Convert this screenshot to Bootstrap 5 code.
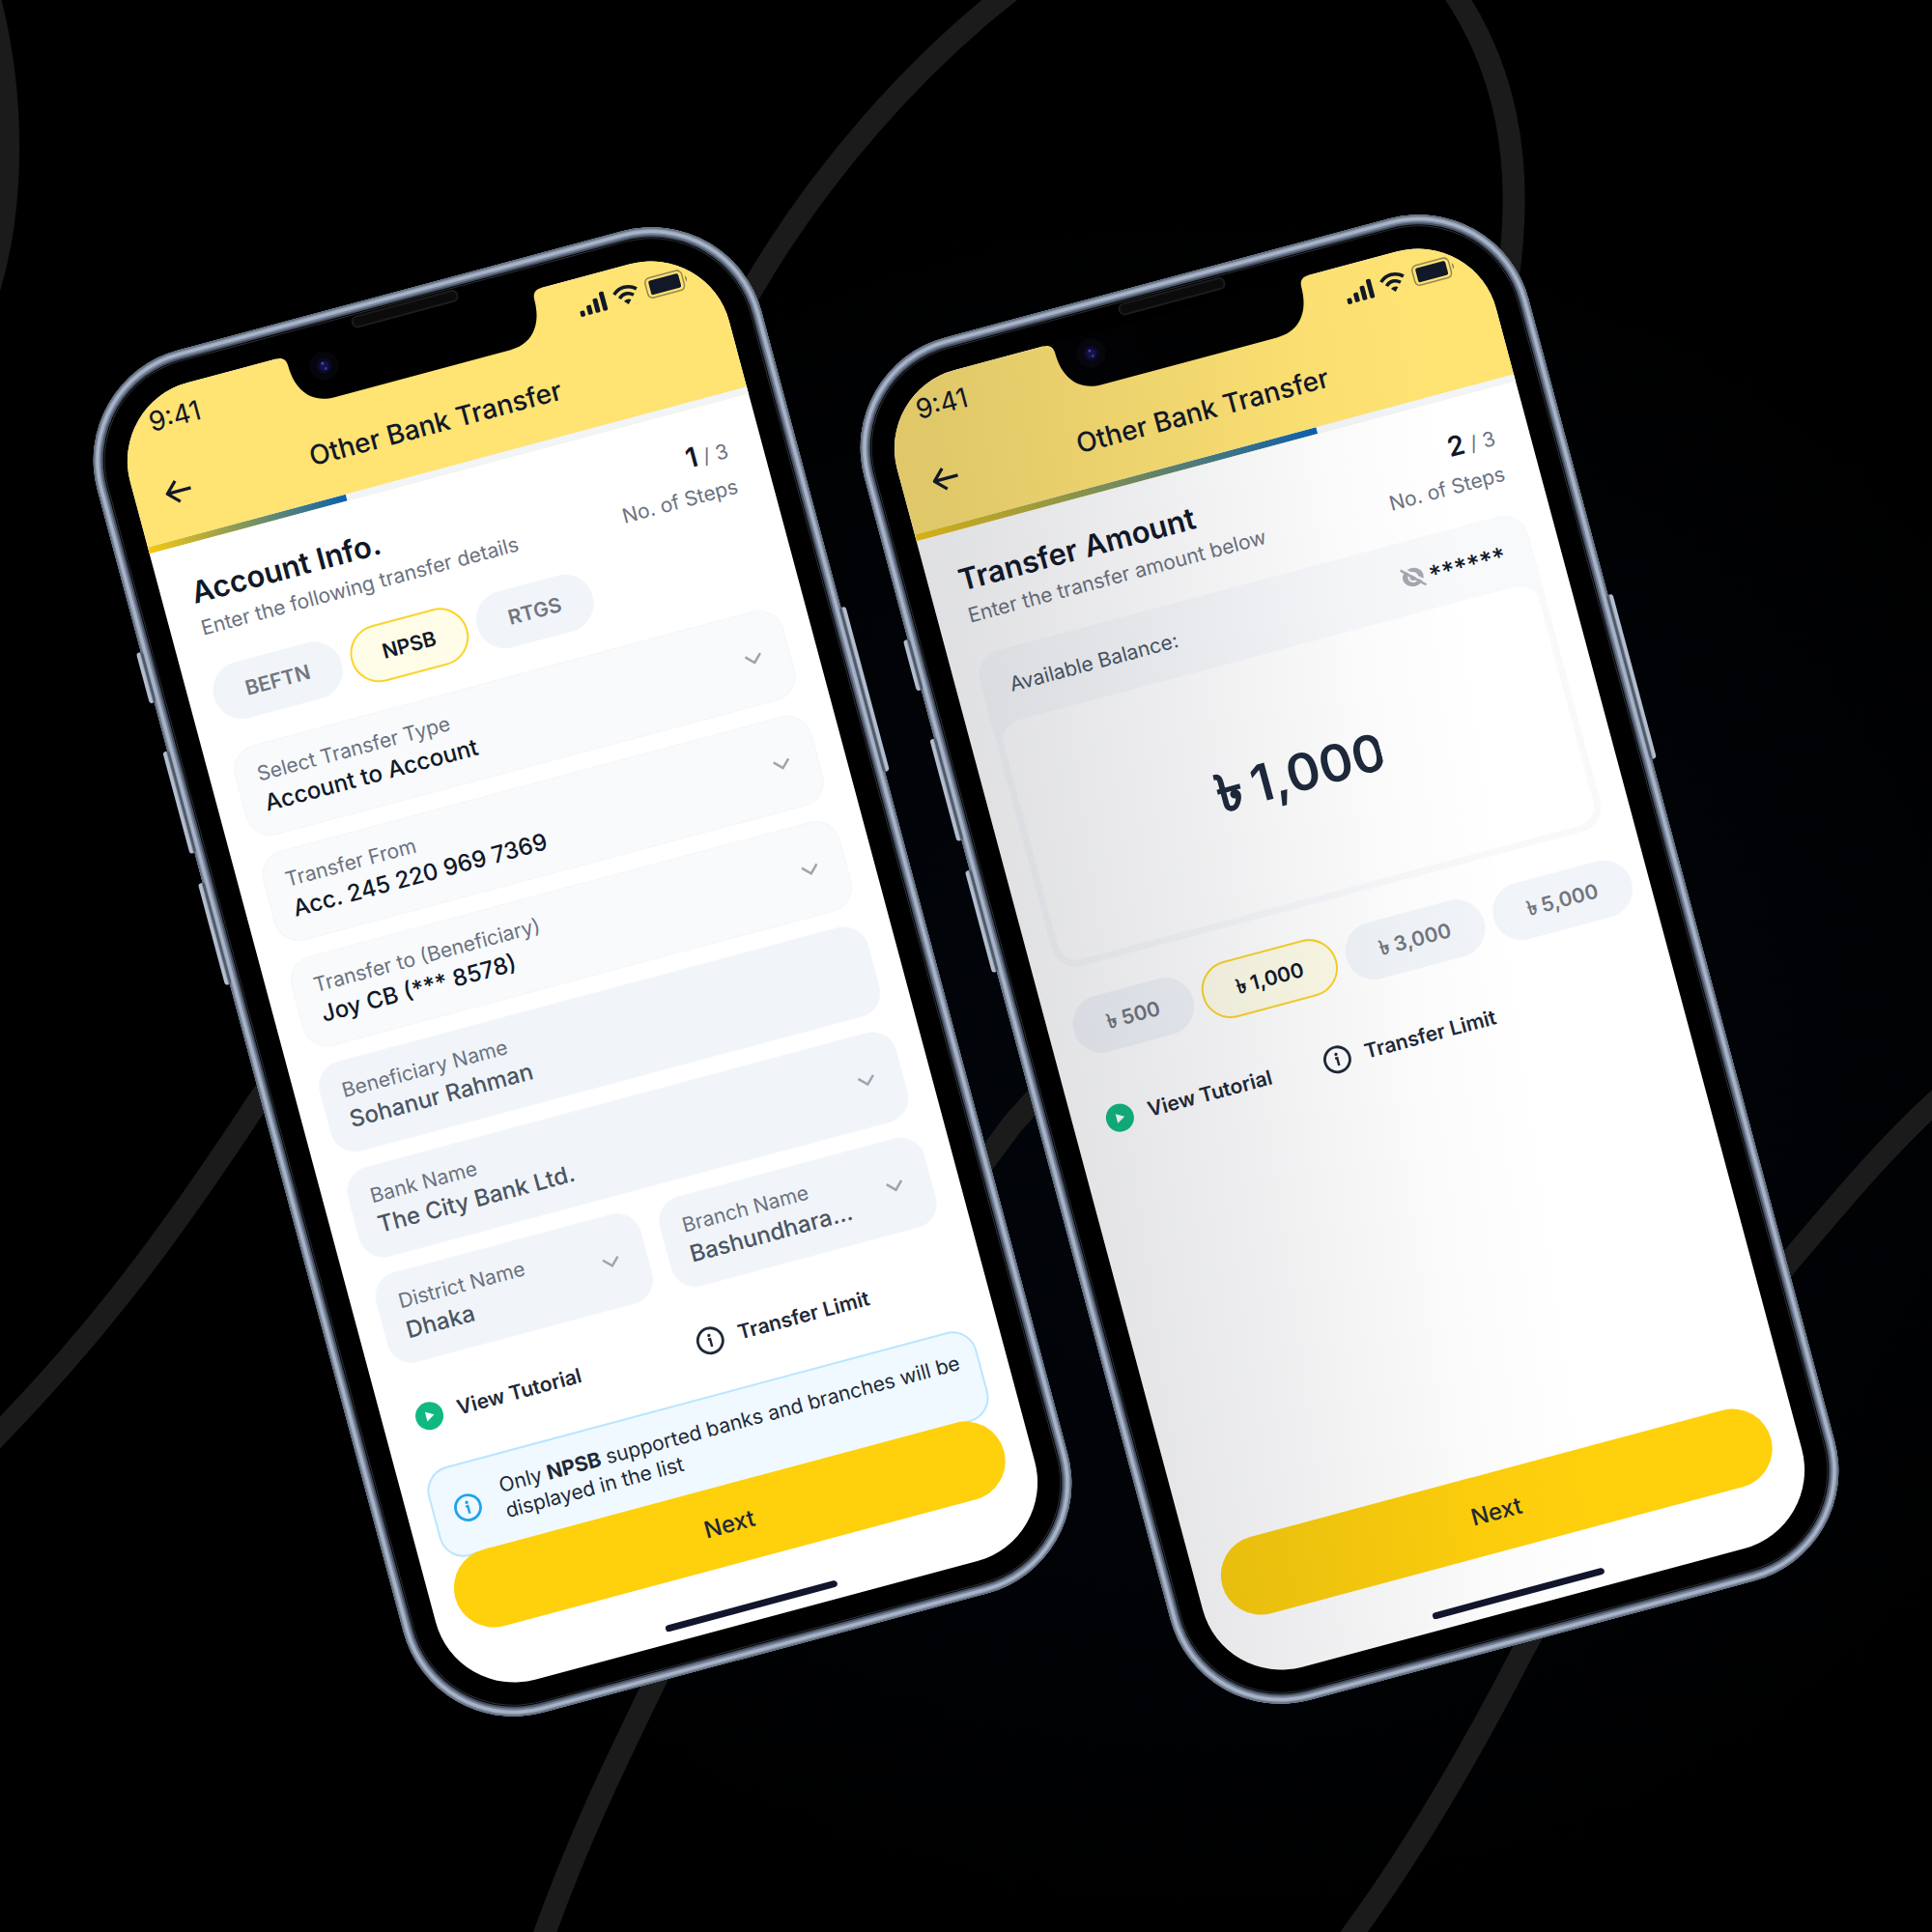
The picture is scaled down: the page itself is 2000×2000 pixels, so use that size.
<!DOCTYPE html>
<html lang="en">
<head>
<meta charset="utf-8">
<meta name="viewport" content="width=device-width, initial-scale=1">
<title>Other Bank Transfer</title>
<link href="https://cdn.jsdelivr.net/npm/bootstrap@5.3.0/dist/css/bootstrap.min.css" rel="stylesheet">
<style>
  :root { --ink: #111827; --muted: #6b7280; --sun: #ffd00c; }
  body { font-family: Inter, "Noto Sans", "DejaVu Sans", sans-serif; font-size: 21px; line-height: 28px; color: var(--ink); background: #000; overflow: hidden; }
  .stage { min-height: 100vh; column-gap: 82px; background: radial-gradient(ellipse 50% 45% at 62% 55%, #02050b 0%, #010307 55%, #000 100%); }
  .backdrop { z-index: 0; }
  .backdrop path { fill: none; stroke: #1b1b1b; stroke-width: 18; }

  /* device shell */
  .device { flex: 0 1 712px; min-width: 0; z-index: 1; padding: 35px; border-radius: 118px; background: #75819a; transform: rotate(-15deg); box-shadow: inset 0 0 2px 2px #5d687b, inset 0 0 1px 6px #aab6c9; }
  .device-low { margin-top: 12px; }
  .device-high { margin-bottom: 14px; }
  .device::before { content: ""; position: absolute; inset: 8px; border-radius: 110px; background: #000; border: 2px solid #4a5363; box-shadow: inset 0 0 0 1px #000, inset 0 0 0 2px #2a2e35; }
  .side-key { position: absolute; width: 7px; border-radius: 3px; background: linear-gradient(90deg, #b3bed0 0 45%, #4f5968 70%); }
  .key-mute { left: -5px; top: 292px; height: 54px; }
  .key-up { left: -5px; top: 398px; height: 109px; }
  .key-down { left: -5px; top: 539px; height: 109px; }
  .key-power { right: -5px; top: 435px; height: 176px; transform: scaleX(-1); }
  .earpiece { position: absolute; top: 13px; left: 50%; width: 114px; height: 13px; margin-left: -57px; border: 2px solid #1c1c1c; border-radius: 6px; background: #0b0b0b; }
  .display-panel { min-height: 1390px; border-radius: 84px; background: #fff; }
  .notch { position: absolute; top: 30px; left: 50%; width: 284px; height: 60px; margin-left: -142px; z-index: 2; }
  .shade { position: absolute; inset: 0; z-index: 3; pointer-events: none; background: linear-gradient(97deg, rgba(15, 20, 40, .13) 6%, rgba(15, 20, 40, .07) 34%, rgba(15, 20, 40, .02) 56%, rgba(15, 20, 40, 0) 72%); }

  /* header */
  .app-head { background: #ffe373; }
  .status-bar { height: 60px; padding: 0 30px 0 35px; font-size: 28px; }
  .nav-bar { display: grid; grid-template-columns: 40px 1fr 40px; align-items: center; height: 94px; padding: 0 26px; }
  .nav-bar h1 { font-size: 28px; line-height: 34px; font-weight: 500; }
  .step-bar { height: 7px; border-radius: 0; background: #f1f5f9; }
  .step-bar .progress-bar { background: linear-gradient(90deg, #f5c90f, #0b61ad); }

  /* body */
  .pane { padding: 33px 28px 0 26px; }
  .pane-head { padding: 0 8px 0 6px; height: 72px; }
  .pane-head h2 { font-size: 31px; line-height: 36px; font-weight: 600; margin-bottom: 6px; white-space: nowrap; }
  .subtle { color: var(--muted); }
  .step-count { line-height: 32px; margin-bottom: 8px; }
  .step-count strong { font-size: 28px; font-weight: 600; color: var(--ink); }
  .chips { gap: 10px; margin-top: 26px; }
  .chip { height: 60px; padding: 0 32px; border: 2px solid transparent; border-radius: 30px; background: #f1f5f9; color: #72767f; font-weight: 600; line-height: 56px; white-space: nowrap; }
  .btn-check:checked + .chip { background: #fffde8; border-color: #fbd32c; color: var(--ink); }
  .sums { margin-top: 33px; }
  .sums .chip { padding: 0 34px; }

  .fields { gap: 17px 20px; margin-top: 28px; }
  .entry { flex: 1 1 100%; min-width: 0; padding: 16px 28px 16px 22px; border: 1px solid #f3f6f9; border-radius: 26px; background: #f8fafc; }
  .entry label { display: block; color: var(--muted); }
  .entry select, .entry input { display: block; width: 100%; height: 34px; padding: 0; border: 0; background: transparent; appearance: none; color: var(--ink); font-size: 24px; line-height: 34px; font-weight: 500; outline: 0; }
  .entry.locked { background: #f1f5f9; }
  .entry.locked select, .entry.locked input { color: #4b5563; opacity: 1; }
  .entry.half { flex: 1 1 0; }

  .links { padding-left: 8px; }
  .links a { color: #1f2937; font-weight: 600; text-decoration: none; gap: 15px; line-height: 30px; }
  .links-split { display: grid; grid-template-columns: 1fr 1fr; column-gap: 22px; margin-top: 42px; }
  .links-row { gap: 55px; margin-top: 54px; }
  .notice { margin: 40px 0 0; padding: 18px 8px 20px 20px; gap: 22px; min-height: 95px; border: 2px solid #bae6fd; border-radius: 26px; background: #f0f9ff; color: #1f2937; line-height: 27px; }

  .dock { padding: 0 28px 12px 26px; }
  .btn-next { height: 82px; border: 0; border-radius: 41px; background: var(--sun); color: #1f2937; font-size: 24px; font-weight: 500; }
  .btn-next:hover { background: var(--sun); }
  .home-line { width: 184px; height: 7px; margin: 43px auto 0; border-radius: 4px; background: #12162c; }

  /* amount */
  .amount-card { margin-top: 26px; padding: 0 7px 7px; border-radius: 26px; background: #f7f9fb; }
  .amount-head { height: 75px; padding: 0 22px; color: #4b5563; }
  .hidden-sum { color: var(--ink); font-size: 26px; font-weight: 500; line-height: 28px; padding-top: 6px; }
  .amount-box { height: 256px; gap: 11px; border-radius: 20px; background: #fff; color: #1e293b; font-size: 53px; font-weight: 600; }
  .amount-box .taka { -webkit-text-stroke: 1px currentColor; }
  .amount-box input { width: 138px; padding: 0; border: 0; background: transparent; color: inherit; font-weight: inherit; outline: 0; }
</style>
</head>
<body>
<main class="stage position-relative d-flex justify-content-center align-items-center overflow-hidden">
  <svg class="backdrop position-absolute top-0 start-0 w-100 h-100" viewBox="0 0 1568 1568" preserveAspectRatio="xMidYMid slice" aria-hidden="true">
    <path d="M-20-40C18 70 14 190-22 270"/>
    <path d="M840-22C740 50 660 150 612 232C500 420 340 705 208 896C130 1015 70 1092-12 1175"/>
    <path d="M1162-30C1228 50 1236 140 1224 225C1190 430 960 760 822 912C720 1050 600 1200 532 1364C500 1430 470 1490 438 1580"/>
    <path d="M1580 886C1530 930 1490 980 1452 1024C1370 1130 1300 1220 1236 1340C1200 1410 1150 1500 1090 1580"/>
  </svg>

  <section class="device device-low position-relative" aria-label="Account info">
    <span class="side-key key-mute"></span><span class="side-key key-up"></span><span class="side-key key-down"></span><span class="side-key key-power"></span>
    <span class="earpiece"></span>
    <svg class="notch" viewBox="0 0 284 60" aria-hidden="true">
      <path d="M0 0H284V5C278 5 274 8 274 15C274 40 262 59 236 59H48C22 59 10 40 10 15C10 8 6 5 0 5Z" fill="#000"/>
      <circle cx="46" cy="25" r="15" fill="#06050b"/><circle cx="46" cy="25" r="8" fill="#0b0926"/><circle cx="46" cy="25" r="5" fill="#15124a"/><circle cx="45" cy="22" r="1.500" fill="#4a46b8"/><circle cx="47" cy="28" r="1.500" fill="#2c3f9c"/>
    </svg>
    <div class="display-panel position-relative overflow-hidden">
      <header class="app-head">
        <div class="status-bar d-flex align-items-center justify-content-between">
          <span>9:41</span>
          <svg width="117" height="26" viewBox="0 0 117 26" aria-hidden="true">
            <g fill="#111827"><rect x="0" y="17" width="5" height="6" rx="1.500"/><rect x="8" y="13" width="5" height="10" rx="1.500"/><rect x="16" y="8" width="5" height="15" rx="1.500"/><rect x="24" y="3" width="5" height="20" rx="1.500"/></g>
            <g fill="none" stroke="#111827" stroke-width="3.600"><path d="M39 9.500C46 3 56 3 63 9.500"/><path d="M43.500 14.800C48 10.500 54 10.500 58.500 14.800"/></g><path d="M51 23L47.200 18.800C49 17 53 17 54.800 18.800Z" fill="#111827"/>
            <rect x="73" y="2" width="39" height="21" rx="5" fill="none" stroke="#111827" stroke-opacity=".45" stroke-width="1.500"/><rect x="76.500" y="5" width="32" height="15" rx="2" fill="#111827"/><path d="M114.500 9.500C116.500 10.500 116.500 14.500 114.500 15.500Z" fill="#111827" fill-opacity=".5"/>
          </svg>
        </div>
        <div class="nav-bar">
          <button type="button" class="btn p-0 border-0 d-flex" aria-label="Back"><svg width="40" height="40" viewBox="0 0 40 40" fill="none" stroke="#111827" stroke-width="3.200" stroke-linejoin="round"><path d="M33 19H8M19 8L8 19L19 30"/></svg></button>
          <h1 class="m-0 text-center">Other Bank Transfer</h1>
        </div>
        <div class="progress step-bar"><div class="progress-bar" style="width:33%"></div></div>
      </header>
      <div class="pane">
        <div class="pane-head d-flex justify-content-between">
          <div><h2>Account Info.</h2><div class="subtle">Enter the following transfer details</div></div>
          <div class="text-end subtle"><div class="step-count"><strong>1</strong> / 3</div>No. of Steps</div>
        </div>
        <div class="chips d-flex">
          <input class="btn-check" type="radio" name="rail" id="r1"><label class="chip" for="r1">BEFTN</label>
          <input class="btn-check" type="radio" name="rail" id="r2" checked><label class="chip" for="r2">NPSB</label>
          <input class="btn-check" type="radio" name="rail" id="r3"><label class="chip" for="r3">RTGS</label>
        </div>
        <form class="fields d-flex flex-wrap">
          <div class="entry d-flex align-items-center"><div class="flex-grow-1"><label for="f1">Select Transfer Type</label><select id="f1"><option>Account to Account</option></select></div><svg width="18" height="12" viewBox="0 0 18 12" fill="none" stroke="#a0a4ab" stroke-width="2.500"><path d="M1 2L9 10L17 2"/></svg></div>
          <div class="entry d-flex align-items-center"><div class="flex-grow-1"><label for="f2">Transfer From</label><select id="f2"><option>Acc. 245 220 969 7369</option></select></div><svg width="18" height="12" viewBox="0 0 18 12" fill="none" stroke="#a0a4ab" stroke-width="2.500"><path d="M1 2L9 10L17 2"/></svg></div>
          <div class="entry d-flex align-items-center"><div class="flex-grow-1"><label for="f3">Transfer to (Beneficiary)</label><select id="f3"><option>Joy CB (*** 8578)</option></select></div><svg width="18" height="12" viewBox="0 0 18 12" fill="none" stroke="#a0a4ab" stroke-width="2.500"><path d="M1 2L9 10L17 2"/></svg></div>
          <div class="entry locked"><label for="f4">Beneficiary Name</label><input id="f4" value="Sohanur Rahman" readonly></div>
          <div class="entry locked d-flex align-items-center"><div class="flex-grow-1"><label for="f5">Bank Name</label><select id="f5"><option>The City Bank Ltd.</option></select></div><svg width="18" height="12" viewBox="0 0 18 12" fill="none" stroke="#a0a4ab" stroke-width="2.500"><path d="M1 2L9 10L17 2"/></svg></div>
          <div class="entry half locked d-flex align-items-center"><div class="flex-grow-1"><label for="f6">District Name</label><select id="f6"><option>Dhaka</option></select></div><svg width="18" height="12" viewBox="0 0 18 12" fill="none" stroke="#a0a4ab" stroke-width="2.500"><path d="M1 2L9 10L17 2"/></svg></div>
          <div class="entry half locked d-flex align-items-center"><div class="flex-grow-1"><label for="f7">Branch Name</label><select id="f7"><option>Bashundhara...</option></select></div><svg width="18" height="12" viewBox="0 0 18 12" fill="none" stroke="#a0a4ab" stroke-width="2.500"><path d="M1 2L9 10L17 2"/></svg></div>
        </form>
        <div class="links links-split">
          <a href="#" class="d-flex align-items-center"><svg width="30" height="30" viewBox="0 0 30 30" aria-hidden="true"><circle cx="15" cy="15" r="14.500" fill="#10b981"/><path d="M11.500 10V20L20 15Z" fill="#fff"/></svg>View Tutorial</a>
          <a href="#" class="d-flex align-items-center"><svg width="30" height="30" viewBox="0 0 30 30" aria-hidden="true"><circle cx="15" cy="15" r="13" fill="none" stroke="#1f2937" stroke-width="2.800"/><circle cx="15" cy="9.500" r="1.700" fill="#1f2937"/><path d="M13 13.500H15.200V21.500" fill="none" stroke="#1f2937" stroke-width="2.500"/></svg>Transfer Limit</a>
        </div>
        <div class="notice d-flex align-items-center">
          <svg class="flex-shrink-0" width="30" height="30" viewBox="0 0 30 30" aria-hidden="true"><circle cx="15" cy="15" r="13" fill="none" stroke="#1ea5e9" stroke-width="2.800"/><circle cx="15" cy="9.500" r="1.700" fill="#1ea5e9"/><path d="M13 13.500H15.200V21.500" fill="none" stroke="#1ea5e9" stroke-width="2.500"/></svg>
          <div>Only <b>NPSB</b> supported banks and branches will be displayed in the list</div>
        </div>
      </div>
      <div class="dock position-absolute bottom-0 w-100">
        <button type="button" class="btn btn-next w-100">Next</button>
        <div class="home-line"></div>
      </div>
    </div>
  </section>

  <section class="device device-high position-relative" aria-label="Transfer amount">
    <span class="side-key key-mute"></span><span class="side-key key-up"></span><span class="side-key key-down"></span><span class="side-key key-power"></span>
    <span class="earpiece"></span>
    <svg class="notch" viewBox="0 0 284 60" aria-hidden="true">
      <path d="M0 0H284V5C278 5 274 8 274 15C274 40 262 59 236 59H48C22 59 10 40 10 15C10 8 6 5 0 5Z" fill="#000"/>
      <circle cx="46" cy="25" r="15" fill="#06050b"/><circle cx="46" cy="25" r="8" fill="#0b0926"/><circle cx="46" cy="25" r="5" fill="#15124a"/><circle cx="45" cy="22" r="1.500" fill="#4a46b8"/><circle cx="47" cy="28" r="1.500" fill="#2c3f9c"/>
    </svg>
    <div class="display-panel position-relative overflow-hidden">
      <div class="shade"></div>
      <header class="app-head">
        <div class="status-bar d-flex align-items-center justify-content-between">
          <span>9:41</span>
          <svg width="117" height="26" viewBox="0 0 117 26" aria-hidden="true">
            <g fill="#111827"><rect x="0" y="17" width="5" height="6" rx="1.500"/><rect x="8" y="13" width="5" height="10" rx="1.500"/><rect x="16" y="8" width="5" height="15" rx="1.500"/><rect x="24" y="3" width="5" height="20" rx="1.500"/></g>
            <g fill="none" stroke="#111827" stroke-width="3.600"><path d="M39 9.500C46 3 56 3 63 9.500"/><path d="M43.500 14.800C48 10.500 54 10.500 58.500 14.800"/></g><path d="M51 23L47.200 18.800C49 17 53 17 54.800 18.800Z" fill="#111827"/>
            <rect x="73" y="2" width="39" height="21" rx="5" fill="none" stroke="#111827" stroke-opacity=".45" stroke-width="1.500"/><rect x="76.500" y="5" width="32" height="15" rx="2" fill="#111827"/><path d="M114.500 9.500C116.500 10.500 116.500 14.500 114.500 15.500Z" fill="#111827" fill-opacity=".5"/>
          </svg>
        </div>
        <div class="nav-bar">
          <button type="button" class="btn p-0 border-0 d-flex" aria-label="Back"><svg width="40" height="40" viewBox="0 0 40 40" fill="none" stroke="#111827" stroke-width="3.200" stroke-linejoin="round"><path d="M33 19H8M19 8L8 19L19 30"/></svg></button>
          <h1 class="m-0 text-center">Other Bank Transfer</h1>
        </div>
        <div class="progress step-bar"><div class="progress-bar" style="width:67%"></div></div>
      </header>
      <div class="pane">
        <div class="pane-head d-flex justify-content-between">
          <div><h2>Transfer Amount</h2><div class="subtle">Enter the transfer amount below</div></div>
          <div class="text-end subtle"><div class="step-count"><strong>2</strong> / 3</div>No. of Steps</div>
        </div>
        <div class="amount-card">
          <div class="amount-head d-flex align-items-center justify-content-between">
            <span>Available Balance:</span>
            <div class="d-flex align-items-center gap-1">
              <svg width="26" height="26" viewBox="0 0 26 26" aria-hidden="true"><ellipse cx="13" cy="13" rx="11" ry="9.500" fill="#a3a7ae"/><circle cx="13" cy="13" r="4.500" fill="none" stroke="#f6f8fb" stroke-width="2"/><path d="M3.500 1L26.500 22" stroke="#f6f8fb" stroke-width="2.500"/><path d="M2 3L24 24" stroke="#a3a7ae" stroke-width="2.400"/></svg>
              <span class="hidden-sum">******</span>
            </div>
          </div>
          <div class="amount-box d-flex align-items-center justify-content-center">
            <label class="taka" for="amt">৳</label>
            <input id="amt" value="1,000" aria-label="Amount">
          </div>
        </div>
        <div class="chips sums d-flex">
          <input class="btn-check" type="radio" name="sum" id="a1"><label class="chip" for="a1">৳ 500</label>
          <input class="btn-check" type="radio" name="sum" id="a2" checked><label class="chip" for="a2">৳ 1,000</label>
          <input class="btn-check" type="radio" name="sum" id="a3"><label class="chip" for="a3">৳ 3,000</label>
          <input class="btn-check" type="radio" name="sum" id="a4"><label class="chip" for="a4">৳ 5,000</label>
        </div>
        <div class="links links-row d-flex">
          <a href="#" class="d-flex align-items-center"><svg width="30" height="30" viewBox="0 0 30 30" aria-hidden="true"><circle cx="15" cy="15" r="14.500" fill="#10b981"/><path d="M11.500 10V20L20 15Z" fill="#fff"/></svg>View Tutorial</a>
          <a href="#" class="d-flex align-items-center"><svg width="30" height="30" viewBox="0 0 30 30" aria-hidden="true"><circle cx="15" cy="15" r="13" fill="none" stroke="#1f2937" stroke-width="2.800"/><circle cx="15" cy="9.500" r="1.700" fill="#1f2937"/><path d="M13 13.500H15.200V21.500" fill="none" stroke="#1f2937" stroke-width="2.500"/></svg>Transfer Limit</a>
        </div>
      </div>
      <div class="dock position-absolute bottom-0 w-100">
        <button type="button" class="btn btn-next w-100">Next</button>
        <div class="home-line"></div>
      </div>
    </div>
  </section>
</main>
<script src="https://cdn.jsdelivr.net/npm/bootstrap@5.3.0/dist/js/bootstrap.bundle.min.js"></script>
</body>
</html>
